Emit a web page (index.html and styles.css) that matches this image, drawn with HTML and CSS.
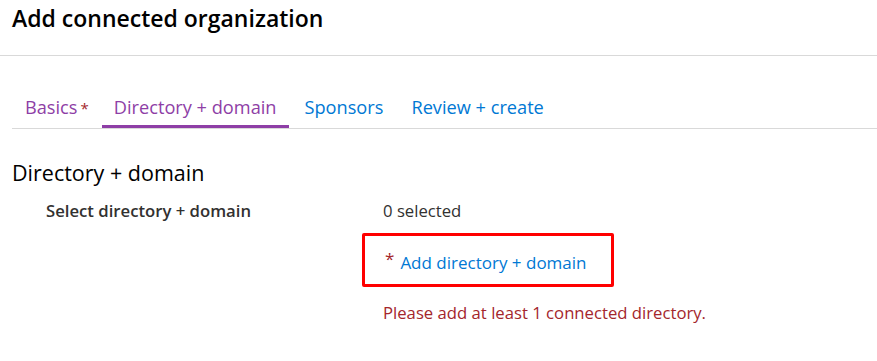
FILE: index.html
```html
<!DOCTYPE html>
<html lang="en">
<head>
  <meta charset="UTF-8">
  <title>Add connected organization</title>
  <link rel="stylesheet" href="styles.css">
</head>
<body>

<header class="blade-header">
  <h1 class="blade-title">Add connected organization</h1>
</header>

<nav class="tabs">
  <a class="tab visited">Basics<span class="tab-req">*</span></a>
  <a class="tab visited active">Directory + domain</a>
  <a class="tab">Sponsors</a>
  <a class="tab">Review + create</a>
</nav>

<main class="section">
  <h2 class="section-title">Directory + domain</h2>

  <div class="field-row">
    <div class="field-label">Select directory + domain</div>
    <div class="field-value">
      <div>0 selected</div>
      <div class="add-box">
        <span class="req">*</span>
        <a class="link">Add directory + domain</a>
      </div>
      <div class="error">Please add at least 1 connected directory.</div>
    </div>
  </div>
</main>

</body>
</html>
```

FILE: styles.css
```css
* { margin: 0; padding: 0; box-sizing: border-box; }
body { font-family: 'Open Sans', 'Noto Sans', sans-serif; color: #323130; background: #fff; font-size: 16.7px; }

.blade-header { height: 56px; padding: 2px 12px 0; border-bottom: 1px solid #d9d9d9; }
.blade-title { font-size: 23px; font-weight: 600; color: #000; line-height: 32px; }

.tabs { display: flex; margin: 38px 0 0 12px; border-bottom: 1px solid #d9d9d9; }
.tab { padding: 0 12px; margin-right: 4px; font-size: 18.2px; line-height: 27px; height: 34px; color: #0078d4; border-bottom: 3px solid transparent; cursor: pointer; }
.tab:first-child { padding-left: 13px; padding-right: 9px; }
.tab.visited { color: #8e3ea6; }
.tab.active { border-bottom-color: #8e3ea6; }
.tab-req { color: #a4262c; margin-left: 3px; font-size: 15px; }

.section { padding: 30px 12px 0; }
.section-title { font-size: 21.5px; font-weight: 400; color: #000; line-height: 28px; }

.field-row { display: grid; grid-template-columns: 337px 1fr; margin-top: 12px; padding-left: 34px; line-height: 24px; }
.field-label { font-weight: 600; color: #323130; }
.field-value { color: #323130; }

.add-box { display: flex; align-items: center; width: 252px; height: 54px; margin: 10px 0 0 -21px; padding: 5px 0 0 20px; border: 3px solid #ff0000; border-radius: 2px; }
.req { color: #a4262c; margin-right: 6px; position: relative; top: -4px; font-size: 17px; }
.link { color: #0078d4; cursor: pointer; font-size: 17px; }

.error { color: #a4262c; margin-top: 14px; }
```
